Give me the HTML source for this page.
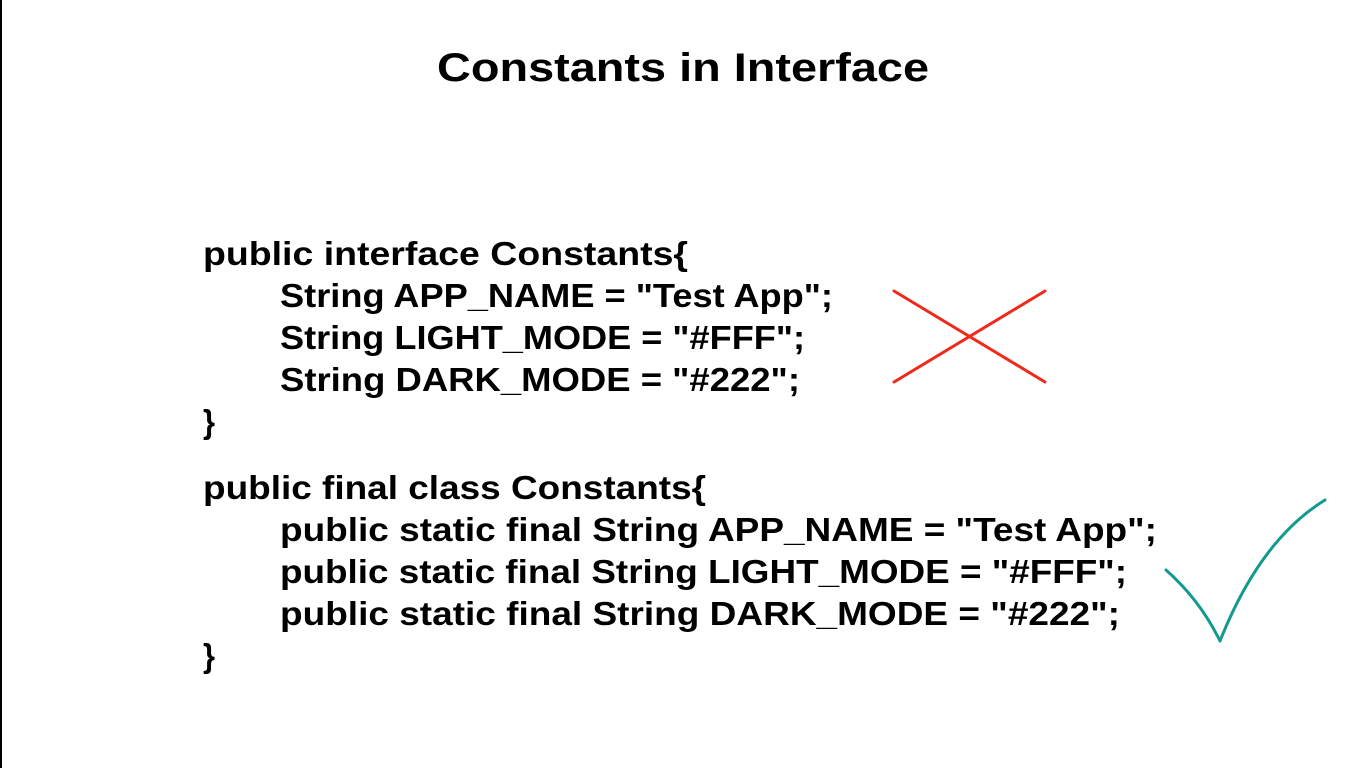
<!DOCTYPE html>
<html><head><meta charset="utf-8"><style>
html,body{margin:0;padding:0;background:#fff;width:1366px;height:768px;overflow:hidden}
svg{display:block}
text{font-family:"Liberation Sans",sans-serif;font-weight:bold;fill:#000}
</style></head><body>
<svg width="1366" height="768" viewBox="0 0 1366 768">
<rect x="0" y="0" width="2" height="768" fill="#000"/>
<text x="437" y="81" font-size="40" textLength="492" lengthAdjust="spacingAndGlyphs">Constants in Interface</text>
<g font-size="33">
<text x="203" y="265" textLength="485" lengthAdjust="spacingAndGlyphs">public interface Constants{</text>
<text x="280" y="307" textLength="553" lengthAdjust="spacingAndGlyphs">String APP_NAME = "Test App";</text>
<text x="280" y="349" textLength="525" lengthAdjust="spacingAndGlyphs">String LIGHT_MODE = "#FFF";</text>
<text x="280" y="391" textLength="520" lengthAdjust="spacingAndGlyphs">String DARK_MODE = "#222";</text>
<text x="203" y="433" textLength="12" lengthAdjust="spacingAndGlyphs">}</text>
<text x="203" y="499" textLength="503" lengthAdjust="spacingAndGlyphs">public final class Constants{</text>
<text x="280" y="541" textLength="877" lengthAdjust="spacingAndGlyphs">public static final String APP_NAME = "Test App";</text>
<text x="280" y="583" textLength="847" lengthAdjust="spacingAndGlyphs">public static final String LIGHT_MODE = "#FFF";</text>
<text x="280" y="625" textLength="840" lengthAdjust="spacingAndGlyphs">public static final String DARK_MODE = "#222";</text>
<text x="203" y="667" textLength="12" lengthAdjust="spacingAndGlyphs">}</text>
</g>
<g stroke="#f02a1a" stroke-width="3" stroke-linecap="round">
<line x1="894" y1="291" x2="1045" y2="382"/>
<line x1="894" y1="382" x2="1045" y2="291"/>
</g>
<path d="M1166 570 Q1200 600 1220 641 Q1260 540 1325 500" fill="none" stroke="#139a8e" stroke-width="3" stroke-linecap="round" stroke-linejoin="round"/>
</svg>
</body></html>
